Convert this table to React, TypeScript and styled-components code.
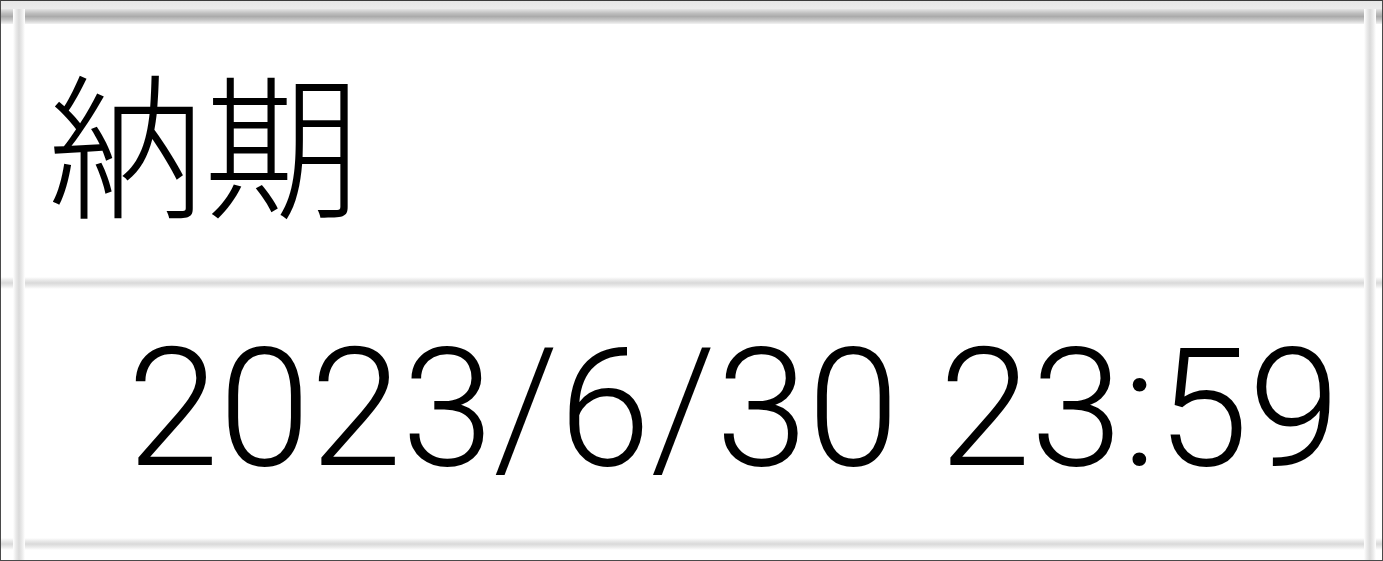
import React from "react";
import styled, { createGlobalStyle } from "styled-components";

const Global = createGlobalStyle`
  html, body { margin: 0; padding: 0; background: #ffffff; }
  #root { width: 1383px; height: 561px; }
`;

const Frame = styled.div`
  width: 1383px;
  height: 561px;
  box-sizing: border-box;
  border: 1px solid #4a4a4a;
  border-top-color: #3a3a3a;
  background: #ffffff;
  overflow: hidden;
  display: grid;
  grid-template-columns: 12px 12px 1339px 12px 1fr;
  grid-template-rows: 8px 15px 253px 12px 249px 12px 1fr;
`;

const TopBand = styled.div`
  grid-column: 1 / -1;
  grid-row: 1;
  background: linear-gradient(#e6e6e6, #ececec);
`;

const HLine = styled.div<{ $row: number; $strong?: boolean }>`
  grid-column: 1 / -1;
  grid-row: ${(p) => p.$row};
  background: ${(p) =>
    p.$strong
      ? "linear-gradient(#e4e4e4 0%, #bdbdbd 30%, #ababab 50%, #c2c2c2 70%, #f2f2f2 100%)"
      : "linear-gradient(#ffffff 0%, #eaeaea 25%, #d9d9d9 50%, #eaeaea 75%, #ffffff 100%)"};
`;

const VLine = styled.div<{ $col: number }>`
  grid-column: ${(p) => p.$col};
  grid-row: 2 / -1;
  background: linear-gradient(90deg, #ffffff 0%, #eaeaea 25%, #dadada 50%, #eaeaea 75%, #ffffff 100%);
`;

const Cell = styled.div<{ $row: number; $align: "start" | "end" }>`
  grid-column: 3;
  grid-row: ${(p) => p.$row};
  display: flex;
  align-items: center;
  justify-content: ${(p) => (p.$align === "end" ? "flex-end" : "flex-start")};
  color: #000000;
  white-space: nowrap;
  z-index: 1;
`;

const HeaderText = styled.span`
  font-family: "Noto Sans CJK JP", "Noto Sans", sans-serif;
  font-size: 156px;
  font-weight: 300;
  line-height: 1;
  margin-left: 23px;
  margin-top: -26px;
`;

const DateText = styled.span`
  font-family: Roboto, "Liberation Sans", Arial, sans-serif;
  font-size: 165px;
  font-weight: 300;
  line-height: 1;
  margin-right: 24px;
  margin-top: -10px;
`;

export default function App() {
  return (
    <>
      <Global />
      <Frame>
        <TopBand />
        <HLine $row={2} $strong />
        <HLine $row={4} />
        <HLine $row={6} />
        <VLine $col={2} />
        <VLine $col={4} />
        <Cell $row={3} $align="start">
          <HeaderText>納期</HeaderText>
        </Cell>
        <Cell $row={5} $align="end">
          <DateText>2023/6/30 23:59</DateText>
        </Cell>
      </Frame>
    </>
  );
}
